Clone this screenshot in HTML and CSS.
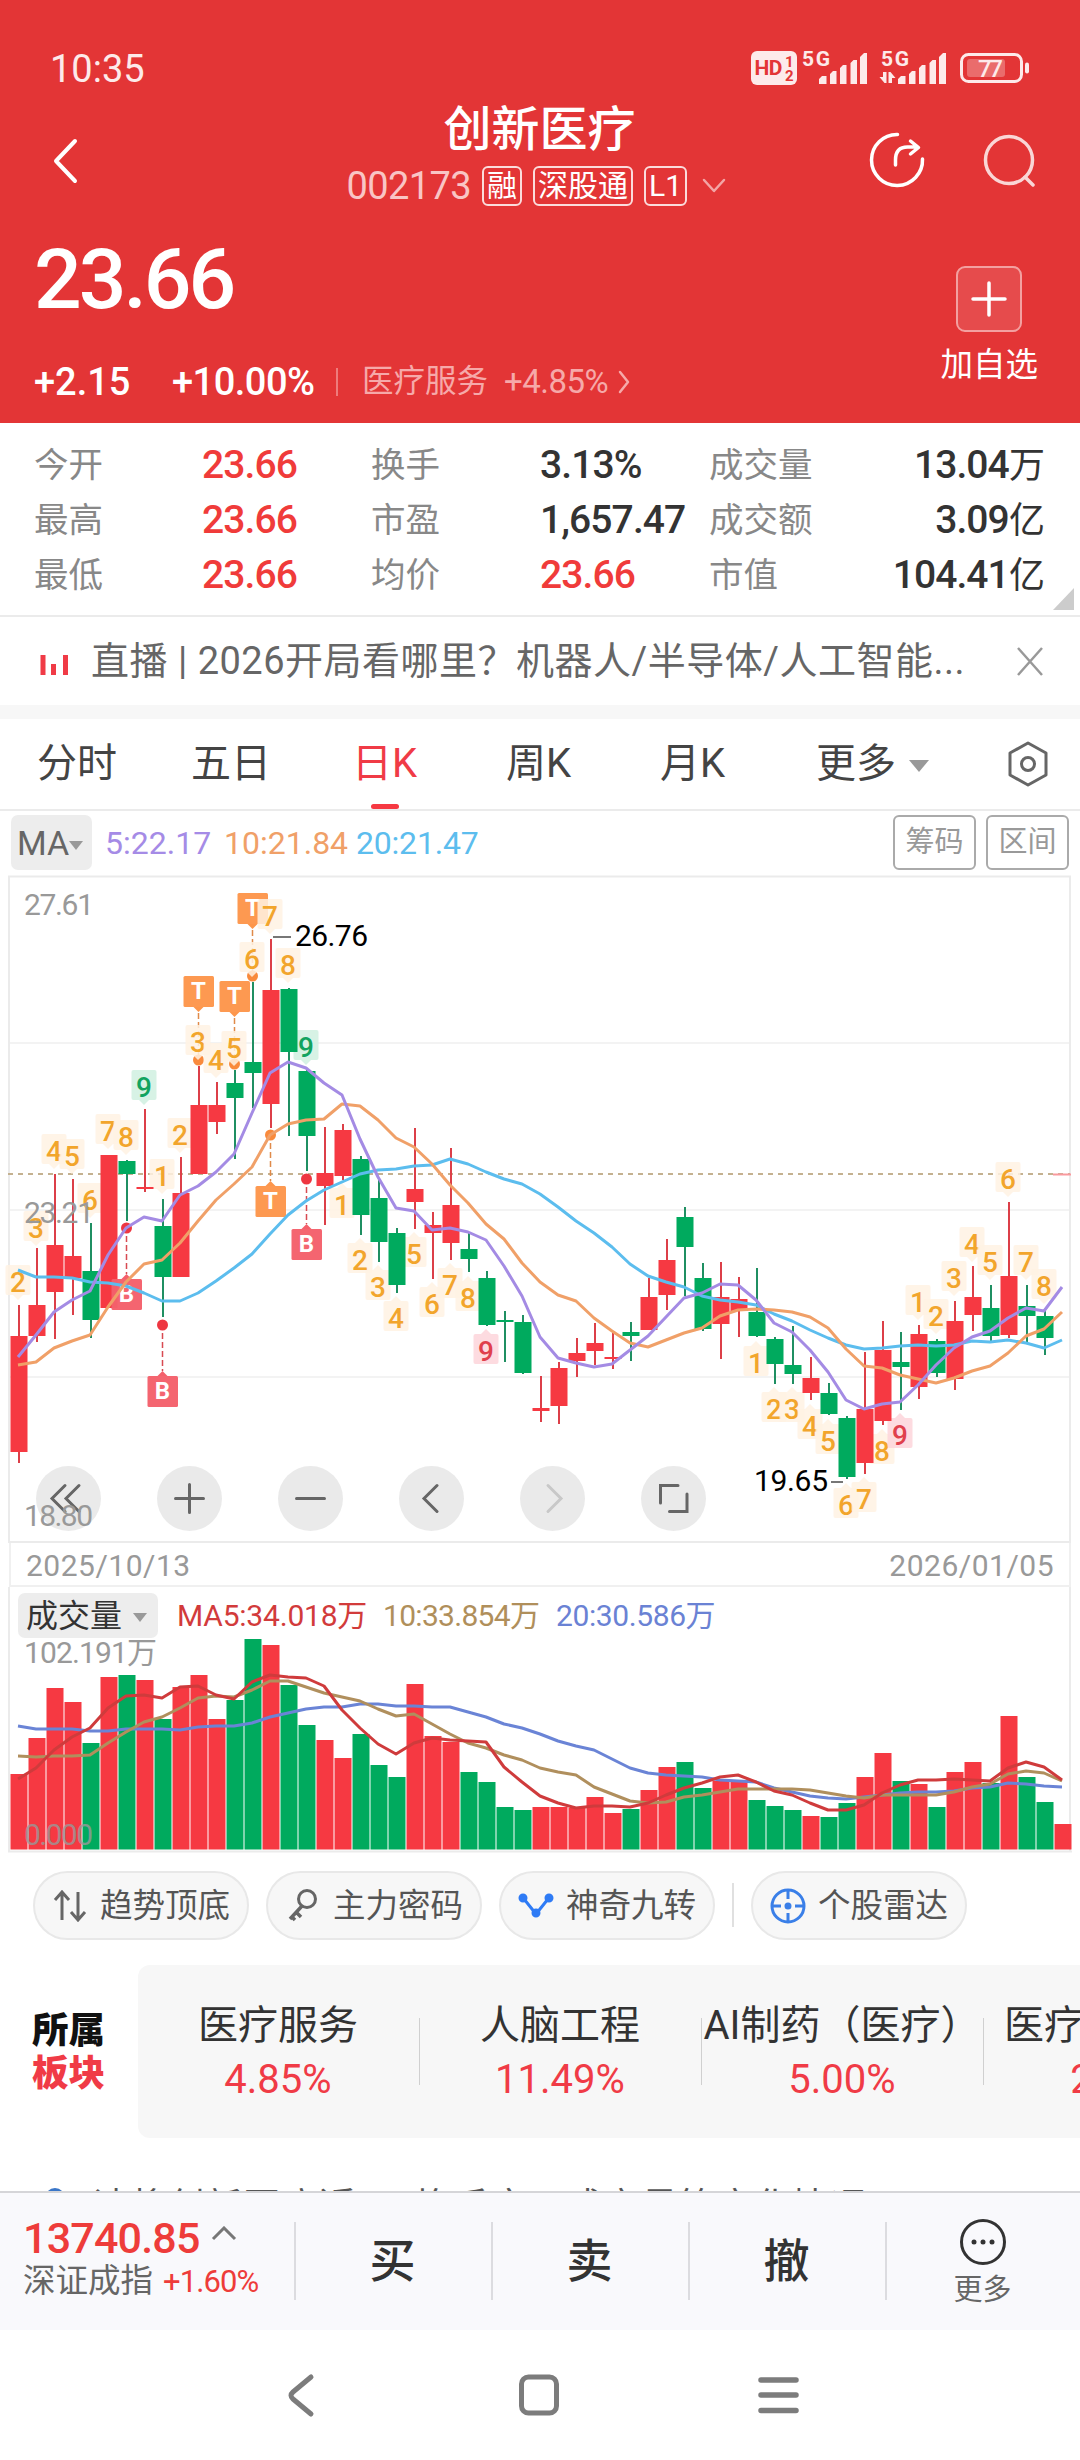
FILE: index.html
```html
<!DOCTYPE html>
<html lang="zh-CN">
<head>
    <meta charset="UTF-8">
    <meta name="viewport" content="width=device-width, initial-scale=1.0">
    <title>创新医疗 002173</title>
    <link rel="stylesheet" href="styles.css">
</head>
<body>
    <header class="header">
        <div class="status">
            <span class="clock">10:35</span>
            <svg class="status-icons" width="290" height="40" viewBox="745 48 290 40">
                <rect x="751" y="51" width="46" height="34" rx="6" fill="#fdeaea"/>
                <g fill="#e33536" font-weight="700">
                    <text x="754.5" y="75" font-size="21" textLength="28">HD</text>
                    <text x="785" y="67" font-size="15">1</text>
                    <text x="785" y="81" font-size="15">2</text>
                </g>
                <g fill="#fdeaea">
                    <text x="802" y="66" font-size="21" font-weight="700" textLength="28">5G</text>
                    <path d="M819 84v-5l3-3h4.500v8zM830 84v-10l3-3h3.500v13zM840 84v-16l3-3h3.500v19zM850.500 84v-21l3-3h3.500v24zM860 84v-27l4-4h3v31z"/>
                    <text x="881" y="66" font-size="21" font-weight="700" textLength="28">5G</text>
                    <path d="M898 84v-5l3-3h4.500v8zM909 84v-10l3-3h3.500v13zM919 84v-16l3-3h3.500v19zM929.500 84v-21l3-3h3.500v24zM939 84v-27l4-4h3v31z"/>
                    <path d="M883 72h3.500v11h-2l-5-6h3.500zM888.500 83v-11h2l5 6h-3.500v5z"/>
                    <rect x="1025" y="62.500" width="4" height="11" rx="2"/>
                    <rect x="967" y="59" width="38" height="18" rx="3" opacity=".3"/>
                    <text x="978" y="77" font-size="24" font-weight="500" textLength="25">77</text>
                </g>
                <rect x="961.500" y="54.500" width="60" height="27" rx="7" fill="none" stroke="#fdeaea" stroke-width="3"/>
            </svg>
        </div>

        <div class="title-row">
            <svg class="back" width="30" height="50" viewBox="0 0 30 50"><path d="M25 5L6 25l19 20"/></svg>
            <div class="title">
                <h1>创新医疗</h1>
                <div class="sub">
                    <span class="code">002173</span>
                    <span class="badge">融</span>
                    <span class="badge">深股通</span>
                    <span class="badge">L1</span>
                    <svg width="24" height="16" viewBox="0 0 24 16"><path d="M2 2l10 11L22 2"/></svg>
                </div>
            </div>
            <svg class="title-icons" width="180" height="64" viewBox="865 128 180 64">
                <path d="M897.500 134.500A25.500 25.500 0 1 0 922.500 159"/>
                <path d="M895.500 165v-5q0-13 12-13h10M910.500 141l8 6.500-8 6.500"/>
                <g opacity=".8"><circle cx="1009" cy="160" r="23.500"/><path d="M1025 177l8 8"/></g>
            </svg>
        </div>

        <div class="price-block">
            <div class="price-main">
                <div class="price">23.66</div>
                <div class="change">
                    <span class="diff">+2.15</span>
                    <span class="pct">+10.00%</span>
                    <span class="sector">医疗服务</span>
                    <span class="sector-pct">+4.85%</span>
                    <svg width="12" height="24" viewBox="0 0 12 24"><path d="M2 2l8 10-8 10"/></svg>
                </div>
            </div>
            <div class="add">
                <span class="add-box"><svg width="36" height="36" viewBox="0 0 36 36"><path d="M18 2v32M2 18h32"/></svg></span>
                <span>加自选</span>
            </div>
        </div>
    </header>

    <section class="quotes">
        <span class="label">今开</span><span class="value up">23.66</span>
        <span class="label">换手</span><span class="value">3.13%</span>
        <span class="label">成交量</span><span class="value last">13.04<i>万</i></span>
        <span class="label">最高</span><span class="value up">23.66</span>
        <span class="label">市盈</span><span class="value">1,657.47</span>
        <span class="label">成交额</span><span class="value last">3.09<i>亿</i></span>
        <span class="label">最低</span><span class="value up">23.66</span>
        <span class="label">均价</span><span class="value up">23.66</span>
        <span class="label">市值</span><span class="value last">104.41<i>亿</i></span>
    </section>

    <section class="live">
        <svg class="live-icon" width="28" height="20" viewBox="0 0 28 20"><path d="M3 0v20M13.500 9v11M25.500 0v20"/></svg>
        <p>直播 | 2026开局看哪里？机器人/半导体/人工智能...</p>
        <svg class="close" width="26" height="30" viewBox="0 0 26 30"><path d="M1 2l24 27M25 2L1 29"/></svg>
    </section>

    <nav class="tabs">
        <a>分时</a>
        <a>五日</a>
        <a class="active">日K</a>
        <a>周K</a>
        <a>月K</a>
        <a class="more">更多<i class="caret"></i></a>
        <svg width="44" height="48" viewBox="0 0 44 48"><path d="M22 3l18 10v22L22 45 4 35V13z"/><circle cx="22" cy="24" r="6.500"/></svg>
    </nav>

    <div class="ma-bar">
        <span class="ma-select">MA<i class="caret"></i></span>
        <span class="ma5">5:22.17</span>
        <span class="ma10">10:21.84</span>
        <span class="ma20">20:21.47</span>
        <span class="ma-btn">筹码</span>
        <span class="ma-btn">区间</span>
    </div>

    <svg class="kline" id="kline" width="1080" height="668" viewBox="0 875 1080 668">
        <g class="grid">
            <path d="M9 1043H1070M9 1210H1070M9 1377H1070" stroke="#f3f3f3"/>
            <path d="M8 876.500H1071M9 1543V876M1070 1543V876M9 1542H1070" stroke="#ebebeb"/>
        </g>
        <path d="M8 1174H1070" stroke="#c4b190" stroke-width="2" stroke-dasharray="5 5"/>
        <g id="marks"></g>
        <g class="axis">
            <text x="24" y="915" textLength="70">27.61</text>
            <text x="24" y="1223" textLength="70">23.21</text>
        </g>
        <g class="peak">
            <path d="M273 937h18M831 1482h12"/>
            <text x="295" y="946" textLength="73">26.76</text>
            <text x="754" y="1491" textLength="74">19.65</text>
        </g>
        <g class="tools">
            <circle cx="68.500" cy="1498.500" r="32.500"/>
            <circle cx="189.500" cy="1498.500" r="32.500"/>
            <circle cx="310.500" cy="1498.500" r="32.500"/>
            <circle cx="431.500" cy="1498.500" r="32.500"/>
            <circle cx="552.500" cy="1498.500" r="32.500"/>
            <circle cx="673.500" cy="1498.500" r="32.500"/>
            <path d="M65 1485.500l-13 13 13 13M79 1485.500l-13 13 13 13"/>
            <path d="M175.500 1498.500h28M189.500 1484.500v28M296.500 1498.500h28M437 1485.500l-13 13 13 13"/>
            <path class="off" d="M548 1485.500l13 13-13 13"/>
            <path d="M678 1485.500h-17.500v17.500M669.500 1511.500h17.500v-17.500"/>
        </g>
        <text class="axis" x="24" y="1526" textLength="69">18.80</text>
    </svg>

    <div class="dates"><span>2025/10/13</span><span>2026/01/05</span></div>

    <section class="volume">
        <div class="vol-bar">
            <span class="vol-select">成交量<i class="caret"></i></span>
            <span class="v5">MA5:34.018万</span>
            <span class="v10">10:33.854万</span>
            <span class="v20">20:30.586万</span>
        </div>
        <svg id="volume" width="1080" height="266" viewBox="0 1587 1080 266">
            <path d="M9 1587V1852M1070 1587V1852M8 1851.500H1072" stroke="#ebebeb" stroke-width="2"/>
            <g id="bars"></g>
            <g class="axis">
                <text x="24" y="1663" textLength="133">102.191万</text>
                <text x="24" y="1845" textLength="69" opacity=".8">0.000</text>
            </g>
        </svg>
    </section>

    <div class="pills">
        <span class="pill">
            <svg width="36" height="36" viewBox="0 0 36 36" stroke="#666"><path d="M10 32V5M3 12l7-8 7 8M26 4v27M19 24l7 8 7-8"/></svg>趋势顶底
        </span>
        <span class="pill">
            <svg width="36" height="36" viewBox="0 0 36 36" stroke="#666"><circle cx="22" cy="11" r="8.500"/><path d="M17 18L5 31M11 24l5 5M7 29l3 3" stroke-width="3.500"/></svg>主力密码
        </span>
        <span class="pill">
            <svg width="36" height="36" viewBox="0 0 36 36" stroke="#2f7bf5"><path d="M6 11l12 15L30 11"/><g fill="#2f7bf5"><circle cx="5" cy="10" r="3"/><circle cx="18" cy="25" r="3"/><circle cx="31" cy="10" r="3"/></g></svg>神奇九转
        </span>
        <i class="divider"></i>
        <span class="pill">
            <svg width="36" height="36" viewBox="0 0 36 36" stroke="#3a7fe8"><circle cx="18" cy="18" r="16"/><path d="M18 3v8M18 25v8M3 18h8M25 18h8"/><circle cx="18" cy="18" r="2" fill="#3a7fe8"/></svg>个股雷达
        </span>
    </div>

    <section class="blocks">
        <div class="blocks-title">所属<b>板块</b></div>
        <div class="blocks-list">
            <div class="block"><span>医疗服务</span><em>4.85%</em></div>
            <div class="block"><span>人脑工程</span><em>11.49%</em></div>
            <div class="block"><span>AI制药（医疗）</span><em>5.00%</em></div>
            <div class="block"><span>医疗器械概念</span><em>2.85%</em></div>
        </div>
    </section>

    <div class="ask"><i></i><span>请将创新医疗近5日换手率、成交量等变化情况</span></div>

    <footer class="trade">
        <div class="index">
            <div class="index-value">13740.85<svg width="26" height="16" viewBox="0 0 26 16"><path d="M2 13L13 2l11 11"/></svg></div>
            <div class="index-name">深证成指<em>+1.60%</em></div>
        </div>
        <div class="action">买</div>
        <div class="action">卖</div>
        <div class="action">撤</div>
        <div class="action more-action">
            <svg width="48" height="48" viewBox="0 0 48 48"><circle cx="24" cy="24" r="21.500" fill="none" stroke="#333" stroke-width="3"/><g fill="#333"><circle cx="15" cy="24" r="2.500"/><circle cx="24" cy="24" r="2.500"/><circle cx="33" cy="24" r="2.500"/></g></svg>
            <span>更多</span>
        </div>
    </footer>

    <div class="sysnav">
        <svg width="520" height="50" viewBox="283 2370 520 50">
            <path d="M311 2377l-18 15q-4 3.500 0 7l18 15"/>
            <rect x="521.500" y="2377" width="35" height="36" rx="7"/>
            <path d="M761 2380h35M761 2395h35M761 2410.500h35" stroke-width="5.500"/>
        </svg>
    </div>

    <script>
        const RED = '#f63942';
        const GREEN = '#00aa5e';

        // [colour, high, body top, body bottom, low, volume top]
        const candles = [
            ['r',1305,1336,1451,1463,1774],['r',1248,1305,1335,1342,1738],['r',1174,1245,1291,1339,1688],['r',1179,1256,1277,1315,1702],
            ['g',1223,1271,1319,1338,1743],['r',1155,1155,1307,1308,1677],['g',1160,1161,1173,1221,1675],['r',1109,1187,1188,1192,1680],
            ['g',1199,1226,1276,1317,1719],['r',1157,1193,1276,1276,1687],['r',1066,1105,1173,1174,1675],['r',1082,1105,1121,1134,1719],
            ['g',1070,1083,1097,1159,1700],['g',982,1062,1072,1108,1639],['r',939,990,1103,1128,1645],['g',988,989,1051,1136,1685],
            ['g',1068,1071,1135,1171,1725],['r',1127,1173,1185,1225,1740],['r',1124,1130,1175,1180,1758],['g',1156,1159,1214,1235,1734],
            ['g',1179,1198,1241,1262,1765],['g',1228,1233,1284,1293,1777],['r',1128,1189,1201,1229,1684],['r',1212,1225,1232,1279,1736],
            ['r',1148,1205,1242,1260,1742],['g',1232,1249,1258,1272,1772],['g',1271,1278,1324,1326,1782],['g',1311,1320,1321,1362,1807],
            ['g',1315,1322,1372,1374,1810],['r',1376,1408,1410,1422,1807],['r',1362,1368,1405,1424,1807],['r',1338,1353,1360,1377,1808],
            ['r',1323,1343,1350,1365,1797],['r',1333,1357,1358,1369,1813],['g',1322,1332,1335,1361,1809],['r',1278,1297,1329,1329,1790],
            ['r',1239,1260,1294,1310,1767],['g',1207,1217,1246,1296,1762],['g',1263,1278,1328,1331,1788],['r',1262,1297,1323,1359,1781],
            ['r',1277,1299,1310,1337,1782],['g',1268,1312,1335,1337,1800],['g',1337,1339,1363,1384,1806],['g',1326,1365,1373,1384,1810],
            ['r',1357,1378,1392,1400,1816],['g',1383,1393,1413,1415,1817],['g',1416,1418,1476,1479,1803],['r',1352,1409,1462,1474,1777],
            ['r',1321,1350,1420,1425,1753],['g',1332,1362,1366,1410,1781],['r',1325,1334,1386,1399,1784],['g',1339,1341,1372,1377,1807],
            ['r',1301,1321,1378,1390,1772],['r',1266,1297,1314,1331,1762],['g',1285,1308,1335,1341,1783],['r',1202,1276,1334,1338,1716],
            ['g',1285,1306,1315,1343,1777],['g',1311,1316,1337,1355,1802],['r',1175,1175,1175,1175,1824]
        ];

        const priceLines = [
            ['#5cbdee', [1270,1277,1277,1278,1282,1283,1286,1293,1301,1301,1293,1281,1268,1254,1234,1215,1201,1190,1182,1174,1170,1169,1166,1165,1159,1164,1172,1179,1184,1194,1207,1221,1233,1247,1264,1276,1282,1287,1296,1300,1302,1305,1314,1321,1330,1338,1345,1349,1348,1346,1345,1346,1345,1341,1342,1340,1343,1348,1340]],
            ['#f0a068', [1365,1362,1348,1341,1335,1307,1282,1264,1260,1243,1221,1200,1184,1167,1135,1124,1120,1119,1104,1106,1120,1138,1147,1164,1185,1203,1224,1239,1263,1282,1295,1301,1318,1331,1343,1347,1340,1333,1328,1316,1310,1309,1310,1312,1317,1328,1349,1366,1368,1375,1379,1383,1378,1371,1366,1353,1336,1329,1312]],
            ['#a48be4', [1357,1335,1312,1300,1291,1255,1228,1217,1221,1195,1186,1172,1154,1113,1073,1062,1068,1083,1095,1139,1177,1208,1211,1230,1228,1232,1240,1266,1296,1337,1358,1363,1367,1364,1350,1336,1317,1298,1293,1284,1285,1300,1323,1332,1350,1372,1400,1409,1404,1402,1385,1365,1348,1337,1331,1318,1308,1311,1287]]
        ];

        const volumeLines = [
            ['#6a84d6', [1726,1729,1729,1729,1731,1731,1729,1729,1729,1730,1727,1726,1726,1723,1717,1713,1709,1707,1707,1704,1704,1706,1706,1707,1707,1712,1717,1724,1728,1734,1741,1746,1750,1759,1768,1773,1775,1776,1777,1780,1781,1782,1788,1792,1796,1798,1799,1797,1795,1793,1792,1792,1791,1788,1787,1783,1784,1786,1787]],
            ['#b08f5d', [1756,1757,1756,1756,1755,1743,1732,1722,1717,1708,1698,1696,1697,1690,1681,1681,1687,1693,1697,1701,1709,1716,1714,1724,1734,1743,1748,1755,1760,1768,1772,1775,1787,1794,1801,1803,1802,1797,1795,1792,1789,1789,1789,1789,1790,1793,1796,1798,1795,1795,1795,1795,1792,1787,1784,1774,1771,1773,1781]],
            ['#cf3b3c', [1779,1768,1750,1737,1728,1708,1696,1695,1698,1687,1686,1695,1699,1682,1675,1677,1678,1686,1710,1728,1744,1754,1743,1738,1740,1741,1742,1767,1782,1796,1803,1808,1806,1806,1807,1803,1795,1788,1783,1777,1775,1782,1791,1795,1803,1810,1810,1805,1793,1785,1780,1780,1779,1780,1781,1768,1762,1767,1780]]
        ];

        // nine-turn counters: [index, digit, box top, pointer direction, kind]
        const counters = [
            [0,2,1265,'d'],[1,3,1211,'d'],[2,4,1134,'d'],[3,5,1139,'d'],[4,6,1183,'d'],[5,7,1114,'d'],[6,8,1120,'d'],
            [7,9,1070,'d','green'],[8,1,1159,'d'],[9,2,1118,'d'],[10,3,1025,'d'],[11,4,1043,'d'],[12,5,1031,'d'],[13,6,942,'d'],
            [14,7,899,'d'],[15,8,948,'d'],[16,9,1030,'d','green'],[18,1,1188,'u'],[19,2,1243,'u'],[20,3,1270,'u'],[21,4,1301,'u'],
            [22,5,1237,'u'],[23,6,1287,'u'],[24,7,1268,'u'],[25,8,1281,'u'],[26,9,1334,'u','pink'],[41,1,1346,'u'],[42,2,1392,'u'],
            [43,3,1392,'u'],[44,4,1409,'u'],[45,5,1424,'u'],[46,6,1488,'u'],[47,7,1482,'u'],[48,8,1434,'u'],[49,9,1418,'u','pink'],
            [50,1,1285,'d'],[51,2,1299,'d'],[52,3,1261,'d'],[53,4,1227,'d'],[54,5,1245,'d'],[55,6,1162,'d'],[56,7,1245,'d'],[57,8,1269,'d']
        ];

        // trade tags: [index, letter, box top, dot y, pointer direction]
        const tags = [
            [10,'T',976,1060,'d'],[12,'T',981,1064,'d'],[13,'T',893,976,'d'],[14,'T',1186,1135,'u'],
            [6,'B',1279,1228,'u'],[8,'B',1376,1325,'u'],[16,'B',1229,1179,'u']
        ];

        const cx = i => 19 + i * 18;

        function pointer(x, top, h, dir) {
            return dir === 'd' ? `M${x - 5} ${top + h}h10l-5 5z` : `M${x - 5} ${top}h10l-5 -5z`;
        }

        function drawTag([i, letter, top, dot, dir]) {
            const x = cx(i) - 0.5;
            const fill = letter === 'T' ? '#fd964b' : '#f4606b';
            const line = letter === 'T' ? '#e08a4a' : '#d84a52';
            const from = dir === 'd' ? top + 37 : dot + 8;
            const to = dir === 'd' ? dot - 4 : top - 5;
            return `<path d="M${x} ${from}V${to}" stroke="${line}" stroke-width="1.500" stroke-dasharray="6 3"/>
                <circle cx="${x}" cy="${dot}" r="5.500" fill="${letter === 'T' ? '#f98a3c' : '#ee3641'}"/>
                <rect x="${x - 15}" y="${top}" width="30.500" height="31" rx="1.500" fill="${fill}" opacity=".97"/>
                <path d="${pointer(x, top, 31, dir)}" fill="${fill}"/>
                <text class="tag" x="${x}" y="${top + 23}">${letter}</text>`;
        }

        function drawCounter([i, n, top, dir, kind]) {
            const x = cx(i) - 1;
            return `<g class="counter ${kind || ''}">
                <rect x="${x - 12.5}" y="${top}" width="25" height="30" rx="2"/>
                <path d="${pointer(x, top, 30, dir)}"/>
                <text x="${x}" y="${top + 27}">${n}</text></g>`;
        }

        function drawLine([color, ys]) {
            const pts = ys.map((y, i) => `${18 + i * 18},${y}`).join(' ');
            return `<polyline points="${pts}" fill="none" stroke="${color}" stroke-width="3" stroke-linejoin="round"/>`;
        }

        const candleHtml = candles.map(([c, high, top, bottom, low], i) => {
            if (i === candles.length - 1) {
                return '<path d="M1053 1174.500h18" stroke="#f99a9e" stroke-width="2"/>';
            }
            const wick = c === 'r' ? '#dc3f48' : '#1f8f62';
            return `<path d="M${cx(i)} ${high}V${low}" stroke="${wick}" stroke-width="2"/>
                <rect x="${cx(i) - 8.5}" y="${top}" width="17" height="${bottom - top + 1}" fill="${c === 'r' ? RED : GREEN}"/>`;
        }).join('');

        document.getElementById('marks').innerHTML =
            tags.filter(t => t[1] === 'T').map(drawTag).join('') +
            counters.map(drawCounter).join('') +
            candleHtml +
            tags.filter(t => t[1] === 'B').map(drawTag).join('') +
            priceLines.map(drawLine).join('');

        document.getElementById('bars').innerHTML =
            candles.map((c, i) => `<rect x="${cx(i) - 8.5}" y="${c[5]}" width="17" height="${1849.5 - c[5]}" fill="${c[0] === 'r' ? RED : GREEN}"/>`).join('') +
            volumeLines.map(drawLine).join('');
    </script>
</body>
</html>
```
FILE: styles.css
```css
* {
    box-sizing: border-box;
}
body {
    margin: 0;
    width: 1080px;
    height: 2460px;
    overflow: hidden;
    background-color: #fff;
    color: #333;
    font-family: Roboto, "Noto Sans CJK SC", sans-serif;
    display: flex;
    flex-direction: column;
}
body > * {
    flex-shrink: 0;
}
svg {
    display: block;
    flex-shrink: 0;
}
i, em {
    font-style: normal;
}
.caret {
    display: inline-block;
    border: 7px solid transparent;
    border-top: 9px solid #999;
    border-bottom: 0;
}

/* header */
.header {
    height: 423px;
    background-color: #e33536;
    color: #fff;
}
.header svg {
    fill: none;
    stroke-linecap: round;
    stroke-linejoin: round;
}
.header .status-icons text {
    stroke: none;
}
.status {
    height: 106px;
    padding: 48px 45px 0 50px;
    display: flex;
    justify-content: space-between;
}
.clock {
    font-size: 38px;
    line-height: 42px;
    color: #fdeaea;
}
.title-row {
    height: 106px;
    padding: 0 35px 0 50px;
    display: flex;
    justify-content: space-between;
}
.back {
    margin-top: 30px;
    stroke: #fff;
    stroke-width: 4;
}
.title {
    width: 560px;
    margin-left: 144px;
}
.title h1 {
    margin: 0;
    font-size: 48px;
    font-weight: 500;
    line-height: 48px;
    text-align: center;
    padding-right: 10px;
}
.sub {
    margin-top: 12px;
    display: flex;
    align-items: center;
    padding-left: 82px;
    line-height: 38px;
}
.code {
    font-size: 38px;
    letter-spacing: -0.6px;
    color: #f9c5c5;
    margin-right: 11px;
}
.badge {
    border: 2px solid #fbdcdc;
    border-radius: 6px;
    font-size: 30px;
    height: 40px;
    line-height: 36px;
    padding: 0 3px;
    margin-right: 11px;
}
.sub svg {
    margin-left: 4px;
    stroke: #f3a5a5;
    stroke-width: 2.5;
}
.title-icons {
    margin-top: 22px;
    stroke: #fff;
    stroke-width: 3.5;
}
.price-block {
    height: 211px;
    padding: 0 42px 0 34px;
    display: flex;
    justify-content: space-between;
}
.price {
    margin-top: 23px;
    font-size: 84px;
    font-weight: 500;
    line-height: 90px;
    letter-spacing: -3px;
}
.change {
    margin-top: 35px;
    display: flex;
    align-items: center;
    font-size: 38px;
    font-weight: 500;
    line-height: 44px;
}
.diff {
    width: 138px;
}
.pct {
    width: 166px;
    letter-spacing: -0.5px;
    height: 28px;
    line-height: 28px;
    border-right: 2px solid #ee7c7c;
}
.sector {
    margin-left: 24px;
    font-size: 31.500px;
    font-weight: 400;
    color: #f6a9a9;
}
.sector-pct {
    margin-left: 16px;
    width: 114px;
    font-size: 33px;
    letter-spacing: -0.5px;
    font-weight: 400;
    color: #f6a9a9;
}
.change svg {
    stroke: #f6a9a9;
    stroke-width: 2.5;
}
.add {
    padding-top: 54px;
    display: flex;
    flex-direction: column;
    align-items: center;
    font-size: 32.500px;
    line-height: 40px;
}
.add-box {
    width: 66px;
    height: 66px;
    margin-bottom: 13px;
    border: 2px solid #f3a0a0;
    border-radius: 9px;
    background-color: #e64b4c;
    display: flex;
    align-items: center;
    justify-content: center;
}
.add-box svg {
    stroke: #fff;
    stroke-width: 3.5;
}

/* quotes */
.quotes {
    position: relative;
    height: 194px;
    padding: 15px 36px 0 34px;
    border-bottom: 2px solid #ebebeb;
    display: grid;
    grid-template-columns: 168px 169px 169px 169px 120px 1fr;
    grid-auto-rows: 55px;
    line-height: 55px;
}
.quotes::after {
    content: "";
    position: absolute;
    right: 6px;
    bottom: 5px;
    border-left: 21px solid transparent;
    border-bottom: 22px solid #ccc;
}
.label {
    font-size: 34.500px;
    color: #888;
}
.value {
    font-size: 39px;
    letter-spacing: -0.9px;
    font-weight: 500;
    white-space: nowrap;
}
.value i {
    font-size: 36px;
    font-weight: 400;
}
.up {
    color: #f03b3a;
}
.last {
    text-align: right;
}

/* live banner */
.live {
    height: 102px;
    padding: 0 37px 0 40px;
    border-bottom: 14px solid #f7f7f7;
    display: flex;
    align-items: center;
    fill: none;
}
.live-icon {
    margin-top: 8px;
}
.live svg {
    stroke: #f03b46;
    stroke-width: 5;
}
.live p {
    margin: 0 0 0 23px;
    flex: 1;
    font-size: 38px;
    letter-spacing: 0.5px;
    line-height: 50px;
    color: #666;
    white-space: nowrap;
}
.live .close {
    stroke: #999;
    stroke-width: 2.5;
}

/* period tabs */
.tabs {
    position: relative;
    height: 92px;
    border-bottom: 2px solid #ebebeb;
    padding-left: 37px;
    display: flex;
    align-items: center;
    font-size: 40px;
    color: #444;
    line-height: 90px;
}
.tabs a {
    width: 154px;
}
.tabs a:nth-child(2) {
    width: 161px;
}
.tabs a:nth-child(5) {
    width: 156px;
}
.tabs .active {
    position: relative;
    color: #f03b46;
}
.tabs .active::after {
    content: "";
    position: absolute;
    left: 19px;
    bottom: 0;
    width: 28px;
    height: 5px;
    border-radius: 3px;
    background-color: #f63942;
}
.tabs .more {
    width: 190px;
}
.more .caret {
    margin-left: 13px;
    border-width: 12px 10px 0;
    vertical-align: 5px;
}
.tabs svg {
    fill: none;
    stroke: #666;
    stroke-width: 3;
    stroke-linejoin: round;
}

/* MA bar */
.ma-bar {
    height: 64px;
    padding: 4px 11px 5px;
    display: flex;
    line-height: 56px;
    font-size: 32px;
}
.ma-bar .ma-select {
    width: 81px;
    background-color: #ededed;
    border-radius: 7px;
    padding-left: 6px;
    font-size: 34px;
    color: #666;
    white-space: nowrap;
}
.ma-select .caret {
    vertical-align: 5px;
}
.ma5 {
    width: 119px;
    margin-left: 13px;
    color: #a58be6;
}
.ma10 {
    width: 132px;
    color: #f0a068;
}
.ma20 {
    flex: 1;
    color: #5cbdee;
    letter-spacing: -0.2px;
}
.ma-btn {
    width: 83px;
    margin-left: 10px;
    border: 2px solid #aaa;
    border-radius: 6px;
    color: #999;
    font-size: 29px;
    line-height: 51px;
    text-align: center;
}

/* candlestick chart */
.grid path {
    stroke-width: 2;
}
.axis {
    font-size: 30px;
    fill: #999;
}
.peak text {
    font-size: 30px;
    fill: #000;
}
.peak path {
    stroke: #777;
    stroke-width: 2;
}
.tools circle {
    fill: #e9e9e9;
    opacity: 0.95;
}
.tools path {
    fill: none;
    stroke: #666;
    stroke-width: 3;
    stroke-linecap: round;
}
.tools .off {
    stroke: #c8c8c8;
}
.counter {
    fill: #fff2e3;
}
.counter rect, .counter path {
    opacity: 0.85;
}
.counter text {
    font-size: 28px;
    text-anchor: middle;
    fill: #f2a52c;
    font-weight: 500;
}
.counter.green {
    fill: #d0f0e1;
}
.counter.green text {
    fill: #12a35f;
}
.counter.pink {
    fill: #fdd5da;
}
.counter.pink text {
    fill: #e0404c;
}
.tag {
    font-size: 24px;
    font-weight: 700;
    text-anchor: middle;
    fill: #fff;
}
.dates {
    height: 44px;
    margin: 0 9px;
    padding: 3px 15px 0;
    border: 2px solid #f0f0f0;
    border-top: 0;
    display: flex;
    justify-content: space-between;
    align-items: center;
    font-size: 30px;
    letter-spacing: 0.5px;
    color: #999;
}

/* volume */
.volume {
    position: relative;
    height: 265px;
}
.vol-bar {
    position: absolute;
    top: 6px;
    left: 18px;
    display: flex;
    height: 45px;
    line-height: 46px;
    font-size: 30px;
    white-space: nowrap;
}
.vol-select {
    width: 140px;
    padding-left: 8px;
    margin-right: 19px;
    border-radius: 7px;
    background-color: #ededed;
    font-size: 32px;
}
.vol-select .caret {
    margin-left: 11px;
    vertical-align: 5px;
}
.v5 {
    width: 206px;
    letter-spacing: -0.2px;
    color: #d23b3b;
}
.v10 {
    width: 173px;
    letter-spacing: -0.7px;
    color: #b08f5b;
}
.v20 {
    letter-spacing: -0.4px;
    color: #6a82d4;
}

/* feature pills */
.pills {
    height: 113px;
    padding: 19px 33px 0;
    display: flex;
    gap: 17px;
}
.pill {
    width: 216px;
    height: 69px;
    padding-left: 17px;
    border: 2px solid #e8e8e8;
    border-radius: 35px;
    background-color: #f7f7f7;
    color: #555;
    font-size: 32.500px;
    line-height: 64px;
    white-space: nowrap;
    display: flex;
    align-items: center;
    gap: 12px;
}
.pill svg {
    fill: none;
    stroke-width: 3;
}
.divider {
    width: 2px;
    height: 44px;
    margin-top: 12px;
    background-color: #e0e0e0;
}

/* sector blocks */
.blocks {
    height: 173px;
    display: flex;
}
.blocks-title {
    width: 138px;
    padding: 44px 0 0 32px;
    font-size: 36.500px;
    font-weight: 900;
    line-height: 43px;
    color: #111;
}
.blocks-title b {
    display: block;
    font-weight: 900;
    color: #f03b46;
}
.blocks-list {
    width: 942px;
    background-color: #f7f7f7;
    border-radius: 12px 0 0 12px;
    display: flex;
    overflow: hidden;
}
.block {
    position: relative;
    width: 282px;
    flex-shrink: 0;
    padding: 34px 2px 0 0;
    display: flex;
    flex-direction: column;
    align-items: center;
    font-size: 40px;
    line-height: 54px;
    white-space: nowrap;
}
.block em {
    color: #f03b46;
    font-size: 40px;
}
.block::after {
    content: "";
    position: absolute;
    right: 0;
    top: 53px;
    width: 1px;
    height: 67px;
    background-color: #d0d0d0;
}

/* ask line, cut off by the trade bar */
.ask {
    height: 53px;
    padding: 45px 0 0 45px;
    overflow: hidden;
    display: flex;
    font-size: 37px;
    letter-spacing: 0.7px;
    line-height: 50px;
    color: #555;
    white-space: nowrap;
}
.ask i {
    width: 20px;
    height: 20px;
    margin: 5px 27px 0 0;
    border-radius: 50%;
    background-color: #3a76c8;
}

/* trade bar */
.trade {
    height: 139px;
    border-top: 2px solid #d5d5d8;
    background-color: #f9f9fc;
    display: flex;
}
.index {
    width: 294px;
    padding: 23px 0 0 23px;
}
.index-value {
    display: flex;
    align-items: center;
    font-size: 43px;
    font-weight: 500;
    line-height: 44px;
    letter-spacing: -0.8px;
    color: #ee3c3a;
}
.index-value svg {
    margin: -8px 0 0 11px;
    fill: none;
    stroke: #777;
    stroke-width: 3;
}
.index-name {
    font-size: 32.500px;
    line-height: 42px;
    color: #666;
    white-space: nowrap;
}
.index-name em {
    margin-left: 10px;
    font-size: 31px;
    letter-spacing: -0.9px;
    color: #ee3c3a;
}
.action {
    position: relative;
    width: 197px;
    padding-top: 30px;
    font-size: 46px;
    line-height: 76px;
    font-weight: 500;
    text-align: center;
}
.action::before {
    content: "";
    position: absolute;
    left: 0;
    top: 29px;
    width: 2px;
    height: 78px;
    background-color: #dcdce0;
}
.more-action {
    width: 195px;
    padding-top: 25px;
    display: flex;
    flex-direction: column;
    align-items: center;
    font-size: 29px;
    font-weight: 400;
    line-height: 49px;
    color: #666;
}

/* system navigation */
.sysnav {
    height: 130px;
    padding: 40px 0 0 283px;
}
.sysnav svg {
    fill: none;
    stroke: #7c7c7c;
    stroke-width: 5;
    stroke-linecap: round;
}
```
